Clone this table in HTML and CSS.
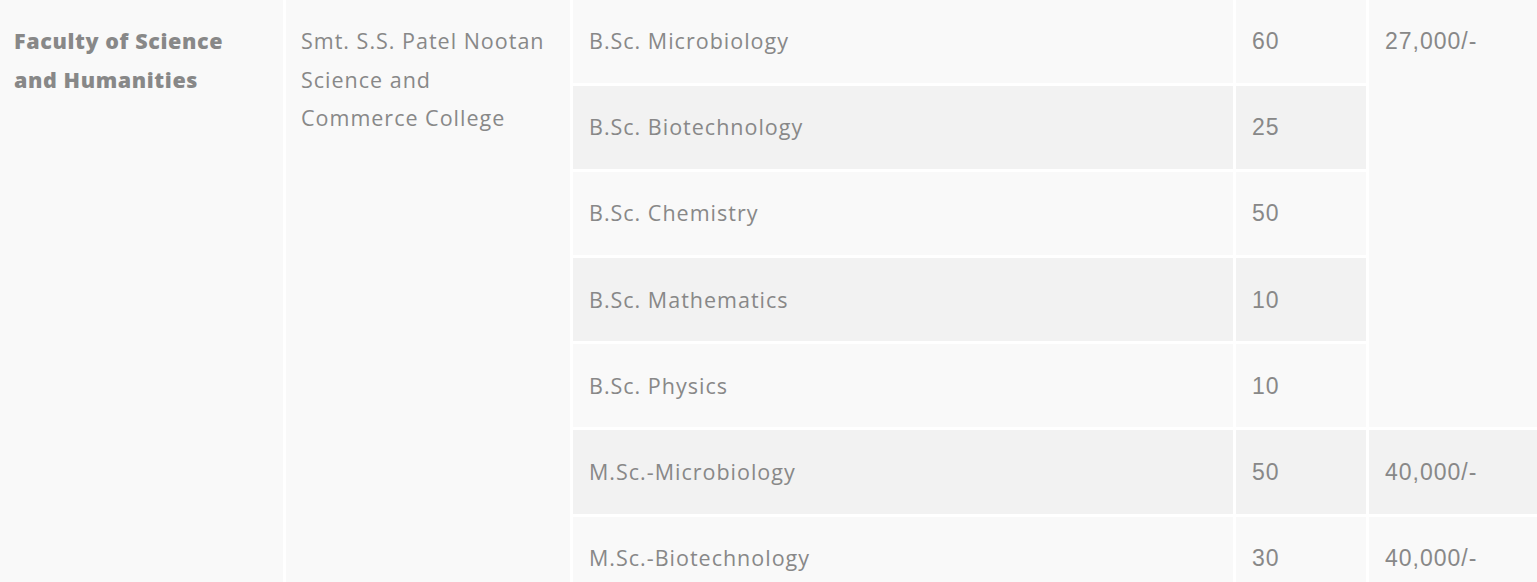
FILE: index.html
```html
<!DOCTYPE html>
<html lang="en">
<head>
<meta charset="utf-8">
<title>Faculty of Science and Humanities</title>
<link rel="stylesheet" href="styles.css">
</head>
<body>
<table class="fees">
  <colgroup>
    <col class="c-faculty">
    <col class="c-college">
    <col class="c-course">
    <col class="c-intake">
    <col class="c-fee">
  </colgroup>
  <tbody>
    <tr class="odd">
      <td class="faculty" rowspan="7">Faculty of Science and Humanities</td>
      <td class="college" rowspan="7">Smt. S.S. Patel Nootan Science and Commerce College</td>
      <td>B.Sc. Microbiology</td>
      <td class="num">60</td>
      <td class="num fee" rowspan="5">27,000/-</td>
    </tr>
    <tr class="even">
      <td>B.Sc. Biotechnology</td>
      <td class="num">25</td>
    </tr>
    <tr class="odd">
      <td>B.Sc. Chemistry</td>
      <td class="num">50</td>
    </tr>
    <tr class="even">
      <td>B.Sc. Mathematics</td>
      <td class="num">10</td>
    </tr>
    <tr class="odd">
      <td>B.Sc. Physics</td>
      <td class="num">10</td>
    </tr>
    <tr class="even">
      <td>M.Sc.-Microbiology</td>
      <td class="num">50</td>
      <td class="num">40,000/-</td>
    </tr>
    <tr class="odd">
      <td>M.Sc.-Biotechnology</td>
      <td class="num">30</td>
      <td class="num">40,000/-</td>
    </tr>
  </tbody>
</table>
</body>
</html>
```
FILE: styles.css
```css
html, body {
  margin: 0;
  padding: 0;
  background: #ffffff;
}

body {
  font-family: "Open Sans", "DejaVu Sans", sans-serif;
  color: #888888;
  overflow: hidden;
}

.fees {
  border-collapse: separate;
  border-spacing: 3px;
  table-layout: fixed;
  width: 1600px;
  margin: -3px 0 0 -3px;
}

.c-faculty { width: 283px; }
.c-college { width: 284px; }
.c-course { width: 660px; }
.c-intake { width: 130px; }
.c-fee { width: 234px; }

.fees td {
  padding: 22.3px 15px 22.3px 16px;
  font-size: 21.5px;
  font-weight: 500;
  line-height: 38.5px;
  letter-spacing: 1px;
  vertical-align: middle;
  background: #f9f9f9;
  white-space: nowrap;
}

.fees tr.even td {
  background: #f2f2f2;
}

.fees td.faculty,
.fees td.college {
  background: #f9f9f9;
  vertical-align: top;
  white-space: normal;
}

.fees td.faculty {
  padding-left: 14px;
  padding-right: 40px;
  font-weight: 800;
  letter-spacing: 0.6px;
}

.fees td.college {
  padding-left: 15px;
  padding-right: 20px;
}

.fees td.num {
  font-family: "Liberation Sans", Arial, sans-serif;
  font-size: 23px;
  font-weight: 400;
  letter-spacing: 1px;
}

.fees td.fee {
  vertical-align: top;
  background: #f9f9f9;
}
```
